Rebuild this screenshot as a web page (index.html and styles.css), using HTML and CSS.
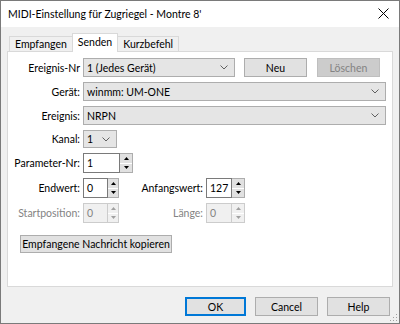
FILE: index.html
```html
<!DOCTYPE html>
<html lang="de">
<head>
    <meta charset="UTF-8">
    <title>MIDI-Einstellung für Zugriegel - Montre 8'</title>
    <link rel="stylesheet" href="styles.css">
</head>
<body>
<div class="window">
    <div class="titlebar">
        <span class="title">MIDI-Einstellung für Zugriegel - Montre 8'</span>
        <svg class="close" width="11" height="11" viewBox="0 0 11 11">
            <path d="M0.5 0.5 L10.5 10.5 M10.5 0.5 L0.5 10.5" stroke="#000" stroke-width="1" fill="none"/>
        </svg>
    </div>

    <div class="body">
        <div class="tabs">
            <div class="tab">Empfangen</div>
            <div class="tab active">Senden</div>
            <div class="tab">Kurzbefehl</div>
        </div>

        <div class="panel">
            <div class="row">
                <label class="lbl">Ereignis-Nr</label>
                <div class="combo w-nr"><span>1 (Jedes Gerät)</span><svg class="chev" width="8" height="5" viewBox="0 0 8 5"><path d="M0.5 0.5 L4 4 L7.5 0.5" stroke="#606060" fill="none"/></svg></div>
                <button class="btn btn-neu">Neu</button>
                <button class="btn btn-del" disabled>Löschen</button>
            </div>

            <div class="row">
                <label class="lbl">Gerät:</label>
                <div class="combo w-full"><span>winmm: UM-ONE</span><svg class="chev" width="8" height="5" viewBox="0 0 8 5"><path d="M0.5 0.5 L4 4 L7.5 0.5" stroke="#606060" fill="none"/></svg></div>
            </div>

            <div class="row">
                <label class="lbl">Ereignis:</label>
                <div class="combo w-full"><span>NRPN</span><svg class="chev" width="8" height="5" viewBox="0 0 8 5"><path d="M0.5 0.5 L4 4 L7.5 0.5" stroke="#606060" fill="none"/></svg></div>
            </div>

            <div class="row row-kanal">
                <label class="lbl">Kanal:</label>
                <div class="combo w-kanal"><span>1</span><svg class="chev" width="8" height="5" viewBox="0 0 8 5"><path d="M0.5 0.5 L4 4 L7.5 0.5" stroke="#606060" fill="none"/></svg></div>
            </div>

            <div class="row row-spin">
                <label class="lbl">Parameter-Nr:</label>
                <div class="spin">
                    <div class="spin-input w-param">1</div>
                    <div class="spin-btns">
                        <div class="spin-up"><svg width="5" height="3" viewBox="0 0 5 3"><path d="M0 3 L2.5 0 L5 3 Z" fill="#000"/></svg></div>
                        <div class="spin-down"><svg width="5" height="3" viewBox="0 0 5 3"><path d="M0 0 L2.5 3 L5 0 Z" fill="#000"/></svg></div>
                    </div>
                </div>
            </div>

            <div class="row row-spin">
                <label class="lbl">Endwert:</label>
                <div class="spin">
                    <div class="spin-input w-small">0</div>
                    <div class="spin-btns narrow">
                        <div class="spin-up"><svg width="5" height="3" viewBox="0 0 5 3"><path d="M0 3 L2.5 0 L5 3 Z" fill="#000"/></svg></div>
                        <div class="spin-down"><svg width="5" height="3" viewBox="0 0 5 3"><path d="M0 0 L2.5 3 L5 0 Z" fill="#000"/></svg></div>
                    </div>
                </div>
                <label class="lbl2">Anfangswert:</label>
                <div class="spin">
                    <div class="spin-input w-small2">127</div>
                    <div class="spin-btns">
                        <div class="spin-up"><svg width="5" height="3" viewBox="0 0 5 3"><path d="M0 3 L2.5 0 L5 3 Z" fill="#000"/></svg></div>
                        <div class="spin-down"><svg width="5" height="3" viewBox="0 0 5 3"><path d="M0 0 L2.5 3 L5 0 Z" fill="#000"/></svg></div>
                    </div>
                </div>
            </div>

            <div class="row row-spin disabled">
                <label class="lbl">Startposition:</label>
                <div class="spin">
                    <div class="spin-input w-small">0</div>
                    <div class="spin-btns narrow">
                        <div class="spin-up"><svg width="5" height="3" viewBox="0 0 5 3"><path d="M0 3 L2.5 0 L5 3 Z" fill="#a0a0a0"/></svg></div>
                        <div class="spin-down"><svg width="5" height="3" viewBox="0 0 5 3"><path d="M0 0 L2.5 3 L5 0 Z" fill="#a0a0a0"/></svg></div>
                    </div>
                </div>
                <label class="lbl2">Länge:</label>
                <div class="spin">
                    <div class="spin-input w-small2">0</div>
                    <div class="spin-btns">
                        <div class="spin-up"><svg width="5" height="3" viewBox="0 0 5 3"><path d="M0 3 L2.5 0 L5 3 Z" fill="#a0a0a0"/></svg></div>
                        <div class="spin-down"><svg width="5" height="3" viewBox="0 0 5 3"><path d="M0 0 L2.5 3 L5 0 Z" fill="#a0a0a0"/></svg></div>
                    </div>
                </div>
            </div>

            <button class="btn btn-copy">Empfangene Nachricht kopieren</button>
        </div>

        <div class="footer">
            <button class="btn btn-dlg btn-ok">OK</button>
            <button class="btn btn-dlg">Cancel</button>
            <button class="btn btn-dlg">Help</button>
        </div>

        <svg class="grip" width="8" height="8" viewBox="0 0 8 8">
            <rect x="6" y="0" width="1" height="1" fill="#a0a0a0"/>
            <rect x="3" y="3" width="1" height="1" fill="#a0a0a0"/>
            <rect x="6" y="3" width="1" height="1" fill="#a0a0a0"/>
            <rect x="0" y="6" width="1" height="1" fill="#a0a0a0"/>
            <rect x="3" y="6" width="1" height="1" fill="#a0a0a0"/>
            <rect x="6" y="6" width="1" height="1" fill="#a0a0a0"/>
        </svg>
    </div>
</div>
</body>
</html>
```

FILE: styles.css
```css
* {
    box-sizing: border-box;
}
body {
    margin: 0;
    font-family: Lato, "Noto Sans", Arial, sans-serif;
    font-size: 10.5px;
    color: #000;
}
.window {
    width: 400px;
    height: 324px;
    border: 1px solid #7a7a7a;
    display: flex;
    flex-direction: column;
    background-color: #f0f0f0;
}
.titlebar {
    height: 26px;
    background-color: #fff;
    display: flex;
    align-items: center;
    justify-content: space-between;
    padding: 0 10px 1px 7px;
}
.title {
    font-size: 10.5px;
}
.body {
    flex: 1;
    position: relative;
    padding: 6px 6px 0 6px;
}
.tabs {
    display: flex;
    align-items: flex-end;
    height: 18px;
    padding-left: 2px;
    position: relative;
    z-index: 1;
}
.tab {
    height: 15px;
    line-height: 14px;
    padding: 0 5px;
    border: 1px solid #d9d9d9;
    border-bottom: none;
    background-color: #f0f0f0;
}
.tab + .tab {
    margin-left: -1px;
}
.tab.active {
    height: 19px;
    line-height: 16px;
    background-color: #fff;
    margin-bottom: -1px;
    padding: 0 5px;
    position: relative;
}
.panel {
    height: 236px;
    background-color: #fff;
    border: 1px solid #d9d9d9;
    padding-top: 6px;
}
.row {
    display: flex;
    align-items: center;
    height: 19px;
    margin-bottom: 5px;
}
.lbl {
    width: 72px;
    text-align: right;
    margin-right: 3px;
    white-space: nowrap;
}
.lbl2 {
    width: 84px;
    text-align: right;
    margin-right: 3px;
    white-space: nowrap;
}
.combo {
    height: 19px;
    background-color: #e5e5e5;
    border: 1px solid #adadad;
    display: flex;
    align-items: center;
    justify-content: space-between;
    padding: 0 6px 0 3px;
}
.w-nr {
    width: 152px;
}
.w-full {
    width: 303px;
}
.row-kanal {
    height: 18px;
}
.w-kanal {
    width: 34px;
    height: 18px;
}
.btn {
    display: block;
    font-family: inherit;
    font-size: 10.5px;
    color: #000;
    height: 19px;
    padding: 0;
    background-color: #e1e1e1;
    border: 1px solid #adadad;
    border-radius: 0;
    white-space: nowrap;
}
.btn-neu {
    width: 63px;
    margin-left: 9px;
}
.btn-del {
    width: 63px;
    margin-left: 10px;
    background-color: #cccccc;
    border-color: #bfbfbf;
    color: #838383;
}
.row-spin {
    height: 20px;
}
.spin {
    display: flex;
    height: 20px;
}
.spin-input {
    height: 20px;
    border: 1px solid #7a7a7a;
    background-color: #fff;
    padding: 0 0 0 3px;
    line-height: 18px;
}
.w-param {
    width: 37px;
}
.w-small {
    width: 25px;
}
.w-small2 {
    width: 26px;
}
.spin-btns {
    width: 13px;
    display: flex;
    flex-direction: column;
    border: 1px solid #adadad;
    border-left: none;
    background-color: #e1e1e1;
}
.spin-btns.narrow {
    width: 11px;
}
.spin-up, .spin-down {
    flex: 1;
    display: flex;
    align-items: center;
    justify-content: center;
}
.spin-up {
    border-bottom: 1px solid #fff;
}
.disabled .lbl, .disabled .lbl2 {
    color: #838383;
}
.disabled .spin-input {
    background-color: #f0f0f0;
    border-color: #cccccc;
    color: #838383;
}
.disabled .spin-btns {
    background-color: #f0f0f0;
    border-color: #cccccc;
}
.btn-copy {
    width: 152px;
    height: 18px;
    margin: 12px 0 0 12px;
}
.footer {
    display: flex;
    justify-content: flex-end;
    gap: 9px;
    margin-top: 10px;
    padding-right: 3px;
}
.btn-dlg {
    width: 63px;
    height: 19px;
}
.btn-ok {
    width: 61px;
    border: 2px solid #0078d7;
}
.grip {
    position: absolute;
    right: 1px;
    bottom: 1px;
}
```
